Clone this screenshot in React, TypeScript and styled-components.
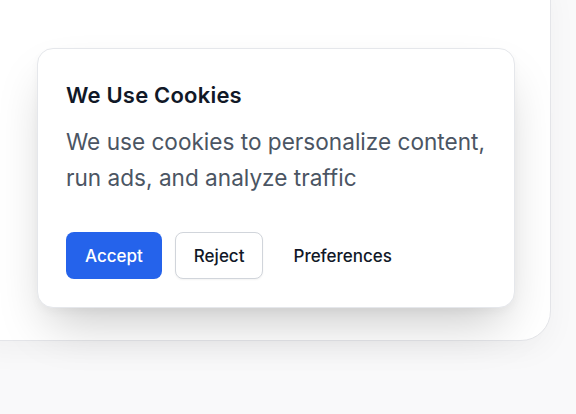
import React from "react";
import styled, { createGlobalStyle } from "styled-components";

const Global = createGlobalStyle`
  html, body { margin: 0; padding: 0; }
  body {
    background: #f9f9fa;
    font-family: Inter, "Noto Sans", sans-serif;
    width: 576px;
    height: 414px;
    overflow: hidden;
  }
`;

const Stage = styled.div`
  width: 576px;
  height: 414px;
  overflow: hidden;
`;

const Panel = styled.div`
  box-sizing: border-box;
  margin: -30px 0 0 -30px;
  width: 581px;
  height: 371px;
  background: #ffffff;
  border: 1px solid #e4e5e9;
  border-radius: 30px;
  box-shadow: 0 10px 30px rgba(0, 0, 0, 0.04);
  padding: 77px 0 0 66px;
`;

const Dialog = styled.section`
  box-sizing: border-box;
  width: 478px;
  height: 260px;
  background: #ffffff;
  border: 1px solid #e5e7eb;
  border-radius: 16px;
  padding: 32px 20px 28px 28px;
  box-shadow: 0 25px 50px -12px rgba(0, 0, 0, 0.22), 0 4px 10px rgba(0, 0, 0, 0.03);
  display: flex;
  flex-direction: column;
`;

const Title = styled.h2`
  margin: 0;
  font-size: 22px;
  line-height: 28px;
  font-weight: 600;
  letter-spacing: 0.2px;
  color: #111827;
`;

const Body = styled.p`
  margin: 15px 0 0;
  font-size: 22.6px;
  line-height: 36px;
  font-weight: 400;
  color: #4b5563;
`;

const Actions = styled.div`
  display: flex;
  align-items: center;
  gap: 13px;
  margin-top: auto;
`;

const Button = styled.button<{ $variant: "primary" | "outline" | "ghost" }>`
  box-sizing: border-box;
  height: 47px;
  padding: 0 ${(p) => (p.$variant === "ghost" ? "16px" : "18px")};
  border-radius: 8px;
  font-family: inherit;
  font-size: 17px;
  font-weight: 500;
  cursor: pointer;
  border: 1px solid
    ${(p) => (p.$variant === "outline" ? "#d1d5db" : "transparent")};
  background: ${(p) => (p.$variant === "primary" ? "#2563eb" : "#ffffff")};
  color: ${(p) => (p.$variant === "primary" ? "#ffffff" : "#111827")};
  box-shadow: ${(p) =>
    p.$variant === "outline" ? "0 1px 2px rgba(0,0,0,0.05)" : "none"};
`;

export default function App() {
  return (
    <Stage>
      <Global />
      <Panel>
        <Dialog>
          <Title>We Use Cookies</Title>
          <Body>We use cookies to personalize content, run ads, and analyze traffic</Body>
          <Actions>
            <Button $variant="primary">Accept</Button>
            <Button $variant="outline">Reject</Button>
            <Button $variant="ghost">Preferences</Button>
          </Actions>
        </Dialog>
      </Panel>
    </Stage>
  );
}
